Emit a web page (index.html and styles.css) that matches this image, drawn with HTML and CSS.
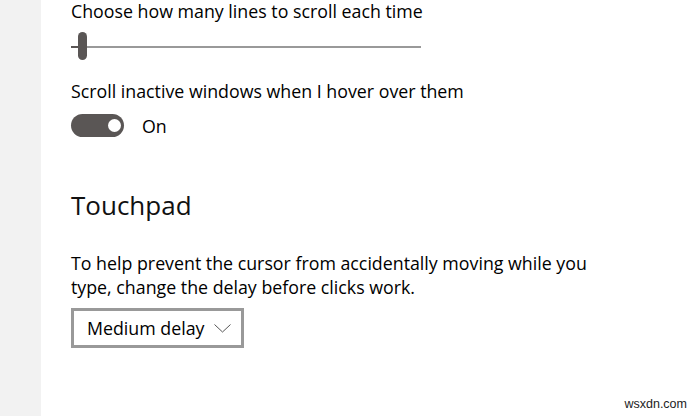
FILE: index.html
```html
<!DOCTYPE html>
<html lang="en">
<head>
<meta charset="utf-8">
<title>Mouse &amp; touchpad</title>
<link rel="stylesheet" href="styles.css">
</head>
<body>
<div class="page">
  <aside class="sidebar"></aside>
  <main class="content">
    <p class="label">Choose how many lines to scroll each time</p>
    <div class="slider">
      <div class="track"><div class="track-fill"></div></div>
      <div class="thumb"></div>
    </div>
    <p class="label label-gap">Scroll inactive windows when I hover over them</p>
    <div class="toggle-row">
      <div class="toggle"><div class="knob"></div></div>
      <span class="toggle-text">On</span>
    </div>
    <h2 class="heading">Touchpad</h2>
    <p class="desc">To help prevent the cursor from accidentally moving while you type, change the delay before clicks work.</p>
    <div class="select">
      <span class="select-text">Medium delay</span>
      <svg class="chevron" width="17" height="9" viewBox="0 0 17 9"><path d="M0.5 0.5 L8.5 8 L16.5 0.5" fill="none" stroke="#555" stroke-width="1"/></svg>
    </div>
    <h2 class="heading heading-bottom">Related settings</h2>
  </main>
</div>
<div class="watermark">wsxdn.com</div>
</body>
</html>
```
FILE: styles.css
```css
html, body {
  margin: 0;
  padding: 0;
  background: #ffffff;
  height: 100%;
  overflow: hidden;
}
body {
  font-family: "Open Sans", "Noto Sans", sans-serif;
  color: #000;
  position: relative;
}
.page {
  display: flex;
  height: 416px;
  overflow: hidden;
}
.sidebar {
  width: 41px;
  flex: none;
  background: #f2f2f2;
}
.content {
  padding-left: 30px;
  flex: 1;
  margin-top: -1px;
}
.label {
  margin: 0;
  font-size: 17.8px;
  line-height: 24px;
}
.label-gap {
  margin-top: 19px;
}
.slider {
  position: relative;
  width: 350px;
  height: 28px;
  margin-top: 9px;
}
.track {
  position: absolute;
  left: 0;
  right: 0;
  top: 14px;
  height: 2px;
  background: #999;
}
.track-fill {
  width: 8px;
  height: 2px;
  background: #5a5655;
}
.thumb {
  position: absolute;
  left: 7px;
  top: 0;
  width: 9px;
  height: 28px;
  border-radius: 5px;
  background: #5a5655;
}
.toggle-row {
  display: flex;
  align-items: center;
  margin-top: 11px;
  height: 23px;
}
.toggle {
  width: 53px;
  height: 23px;
  border-radius: 12px;
  background: #5a5655;
  position: relative;
}
.knob {
  position: absolute;
  right: 3px;
  top: 5px;
  width: 13px;
  height: 13px;
  border-radius: 50%;
  background: #fff;
}
.toggle-text {
  margin-left: 18px;
  font-size: 17.8px;
}
.heading {
  margin: 0;
  font-weight: 400;
  font-size: 26px;
  line-height: 36px;
  margin-top: 50px;
  color: #111;
}
.desc {
  margin: 28px 0 0;
  font-size: 17.8px;
  line-height: 24px;
  max-width: 530px;
}
.select {
  margin-top: 9px;
  height: 34px;
  border: 3px solid #999;
  display: flex;
  align-items: center;
  padding: 0 0 0 13px;
  box-sizing: content-box;
  width: 154px;
}
.select-text {
  font-size: 17.8px;
  flex: 1;
}
.chevron {
  margin-right: 10px;
}
.heading-bottom {
  margin-top: 60px;
}
.watermark {
  position: absolute;
  right: 12px;
  top: 397px;
  font-family: "Liberation Sans", Arial, sans-serif;
  font-size: 12.5px;
  color: #222;
}
```
